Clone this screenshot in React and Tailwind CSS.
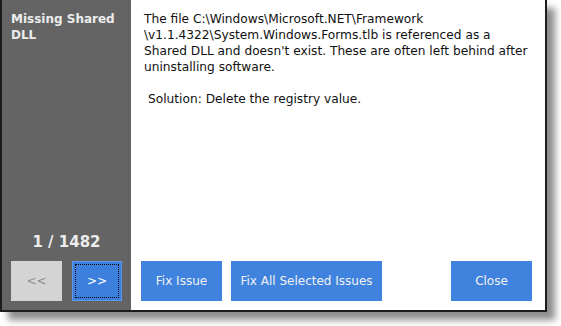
export default function App() {
    const font = { fontFamily: 'Tahoma, "DejaVu Sans", "Liberation Sans", sans-serif' };

    return (
        <div className="w-[561px] h-[326px] bg-white overflow-hidden" style={font}>
            <div className="w-[547px] h-[312px] flex border-l-2 border-r-2 border-b-2 border-[#1c1c1c] bg-white shadow-[8px_8px_7px_rgba(0,0,0,0.45)]">
                {/* left side panel */}
                <div className="w-[129px] bg-[#646464] flex flex-col px-[9px] pt-[11px] pb-[9px]">
                    <div className="text-[#ececec] font-bold text-[12px] leading-[16px]">
                        Missing Shared DLL
                    </div>
                    <div className="flex-1" />
                    <div className="text-center text-[#ececec] font-bold text-[15px] leading-[18px] mb-[10px]">
                        1 / 1482
                    </div>
                    <div className="flex gap-[10px]">
                        <button className="w-[51px] h-[40px] bg-[#d4d4d4] text-[#8e8e8e] text-[12px]">
                            &lt;&lt;
                        </button>
                        <button className="w-[50px] h-[40px] bg-[#3c7fdc] border border-[#5b97ea] p-[2px]">
                            <span className="flex items-center justify-center w-full h-full border border-dotted border-black text-white text-[12px]">
                                &gt;&gt;
                            </span>
                        </button>
                    </div>
                </div>

                {/* message + actions */}
                <div className="flex-1 flex flex-col">
                    <div className="pl-[13px] pt-[11px] text-[12.2px] leading-[16px] text-[#111] whitespace-nowrap">
                        <p>The file C:\Windows\Microsoft.NET\Framework</p>
                        <p>\v1.1.4322\System.Windows.Forms.tlb is referenced as a</p>
                        <p>Shared DLL and doesn't exist. These are often left behind after</p>
                        <p>uninstalling software.</p>
                        <p className="mt-[16px] pl-[4px]">Solution: Delete the registry value.</p>
                    </div>
                    <div className="flex-1" />
                    <div className="flex pl-[10px] pr-[13px] pb-[9px]">
                        <button className="w-[81px] h-[40px] bg-[#3f83df] text-[#f2f2f2] text-[12px]">
                            Fix Issue
                        </button>
                        <button className="ml-[9px] w-[151px] h-[40px] bg-[#3f83df] text-[#f2f2f2] text-[12px]">
                            Fix All Selected Issues
                        </button>
                        <div className="flex-1" />
                        <button className="w-[81px] h-[40px] bg-[#3f83df] text-[#f2f2f2] text-[12px]">
                            Close
                        </button>
                    </div>
                </div>
            </div>
        </div>
    );
}
